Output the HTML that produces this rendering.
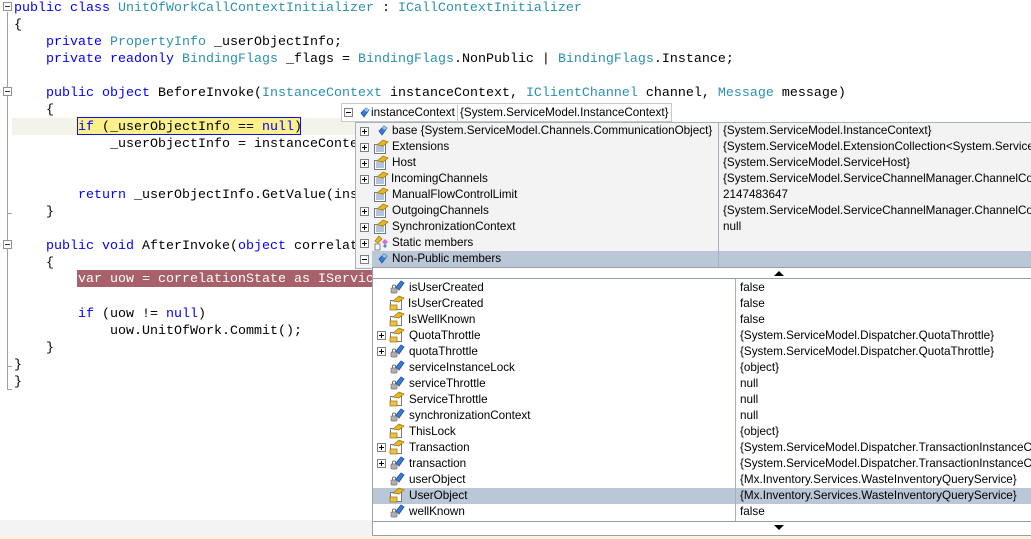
<!DOCTYPE html>
<html><head><meta charset="utf-8">
<style>
*{margin:0;padding:0;box-sizing:border-box}
html,body{width:1031px;height:539px;overflow:hidden}
body{background:#fff;position:relative;font-family:"Liberation Mono",monospace}
#w{position:absolute;left:0;top:0;width:1031px;height:539px;overflow:hidden}
.l{position:absolute;font-size:13.33px;line-height:17px;height:17px;white-space:pre;color:#000}
.k{color:#0000ff}.t{color:#2b91af}
.g{position:absolute;border-left:1px solid #a0a0a0}
.box{position:absolute;width:9px;height:9px;border:1px solid #808080;background:#fff}
.box:before{content:"";position:absolute;left:1px;top:3px;width:5px;height:1px;background:#000}
.box.p:after{content:"";position:absolute;left:3px;top:1px;width:1px;height:5px;background:#000}
.gutbox{position:absolute;left:3px;width:9px;height:9px;border:1px solid #909090;background:#fff}
.gutbox:before{content:"";position:absolute;left:1px;top:3px;width:5px;height:1px;background:#333}
.r{position:absolute;height:16px;font-family:"Liberation Sans",sans-serif;font-size:11.7px;line-height:16px;white-space:nowrap;color:#000}
.v{position:absolute;font-family:"Liberation Sans",sans-serif;font-size:11.7px;line-height:16px;white-space:nowrap;color:#000;height:16px}
svg.i{position:absolute;width:16px;height:16px}
</style></head><body><div id="w">
<svg width="0" height="0" style="position:absolute">
<defs>
<g id="gem"><path d="M5 8 L10 3 L13 5 L8 12 Z" fill="#3a7bd5" stroke="#1d4f9c" stroke-width="0.8"/><path d="M10 3 L13 5 L11 7 L8 5Z" fill="#9cc7f5"/></g>
<g id="fld"><path d="M7 8 L12 2 L15 4 L10 11 Z" fill="#3a7bd5" stroke="#1d4f9c" stroke-width="0.8"/><rect x="2" y="9" width="6" height="5" rx="1" fill="#b0b0b0" stroke="#707070" stroke-width="0.7"/><path d="M3.5 9 V7.5 a1.5 1.5 0 0 1 3 0 V9" fill="none" stroke="#707070"/></g>
<g id="prop"><rect x="1.5" y="5.5" width="11" height="9" fill="#fff" stroke="#6a7a90"/><path d="M3 8h8M3 10h8M3 12h8" stroke="#6a8ab0"/><path d="M4 6 L10 1 L15 3 L10 7 Z" fill="#e8b820" stroke="#9a7010" stroke-width="0.7"/></g>
<g id="propm"><rect x="1.5" y="5.5" width="11" height="9" fill="#fff" stroke="#6a7a90"/><path d="M4 6 L10 1 L15 3 L10 7 Z" fill="#e8b820" stroke="#9a7010" stroke-width="0.7"/><rect x="1" y="10" width="7" height="5" fill="#f0c040" stroke="#9a7010" stroke-width="0.7"/></g>
<g id="stat"><path d="M2 6 L6 1 L9 4 L5 8Z" fill="#e8b820" stroke="#9a7010" stroke-width="0.7"/><path d="M9 7 L12 4 L15 7 L12 10Z" fill="#d070d0"/><rect x="2" y="9" width="5" height="6" fill="#fff" stroke="#555" stroke-width="0.7"/><path d="M10 11 L12 9 L14 11 L12 13Z" fill="#4a8ad5"/></g>
</defs></svg>

<div class="g" style="left:7px;top:12px;height:378px"></div>
<div class="gutbox" style="top:2px"></div>
<div class="gutbox" style="top:87px"></div>
<div class="gutbox" style="top:240px"></div>
<div class="g" style="left:7px;top:213px;width:5px;height:1px;border-left:0;border-top:1px solid #a0a0a0"></div>
<div class="g" style="left:7px;top:366px;width:5px;height:1px;border-left:0;border-top:1px solid #a0a0a0"></div>
<div class="g" style="left:7px;top:389px;width:5px;height:1px;border-left:0;border-top:1px solid #a0a0a0"></div>

<div style="position:absolute;left:12px;top:118px;width:360px;height:17px;background:#f3f3ea"></div>
<div style="position:absolute;left:77px;top:117px;width:224px;height:18px;background:#fbf08a;border:1px solid #1010e0"></div>
<div style="position:absolute;left:77px;top:270px;width:296px;height:17px;background:#a8606a"></div>

<div class="l" style="left:14px;top:0px"><span class="k">public</span> <span class="k">class</span> <span class="t">UnitOfWorkCallContextInitializer</span> : <span class="t">ICallContextInitializer</span></div>
<div class="l" style="left:14px;top:17px">{</div>
<div class="l" style="left:46px;top:34px"><span class="k">private</span> <span class="t">PropertyInfo</span> _userObjectInfo;</div>
<div class="l" style="left:46px;top:51px"><span class="k">private</span> <span class="k">readonly</span> <span class="t">BindingFlags</span> _flags = <span class="t">BindingFlags</span>.NonPublic | <span class="t">BindingFlags</span>.Instance;</div>
<div class="l" style="left:46px;top:85px"><span class="k">public</span> <span class="k">object</span> BeforeInvoke(<span class="t">InstanceContext</span> instanceContext, <span class="t">IClientChannel</span> channel, <span class="t">Message</span> message)</div>
<div class="l" style="left:46px;top:102px">{</div>
<div class="l" style="left:78px;top:119px"><span class="k">if</span> (_userObjectInfo == <span class="k">null</span>)</div>
<div class="l" style="left:110px;top:136px">_userObjectInfo = instanceConte</div>
<div class="l" style="left:78px;top:187px"><span class="k">return</span> _userObjectInfo.GetValue(ins</div>
<div class="l" style="left:46px;top:204px">}</div>
<div class="l" style="left:46px;top:238px"><span class="k">public</span> <span class="k">void</span> AfterInvoke(<span class="k">object</span> correlat</div>
<div class="l" style="left:46px;top:255px">{</div>
<div class="l" style="left:78px;top:271px;color:#fff">var uow = correlationState as IServic</div>
<div class="l" style="left:78px;top:306px"><span class="k">if</span> (uow != <span class="k">null</span>)</div>
<div class="l" style="left:110px;top:323px">uow.UnitOfWork.Commit();</div>
<div class="l" style="left:46px;top:340px">}</div>
<div class="l" style="left:14px;top:357px">}</div>
<div class="l" style="left:14px;top:374px">}</div>

<div style="position:absolute;left:0;top:520px;width:1031px;height:16px;background:#f3f3f3"></div>
<div style="position:absolute;left:0;top:536px;width:1031px;height:3px;background:#fdf3d8"></div>

<div style="position:absolute;left:341px;top:103px;width:331px;height:19px;background:#fff;border:1px solid #c8c8c8"></div>
<div class="box" style="left:344px;top:108px"></div>
<svg class="i" style="left:356px;top:105px"><use href="#gem"/></svg>
<div class="r" style="left:371px;top:105px">instanceContext</div>
<div style="position:absolute;left:457px;top:105px;width:1px;height:16px;background:#c8c8c8"></div>
<div class="r" style="left:460px;top:105px">{System.ServiceModel.InstanceContext}</div>

<div style="position:absolute;left:355px;top:122px;width:680px;height:147px;background:#f3f3f3;border:1px solid #a8b0bc"></div>
<div style="position:absolute;left:372px;top:251px;width:660px;height:16px;background:#bac7d6"></div>
<div style="position:absolute;left:718px;top:123px;width:1px;height:145px;background:#a8b0bc"></div>

<div class="box p" style="left:360px;top:127px"></div><svg class="i" style="left:374px;top:123px"><use href="#gem"/></svg><div class="r" style="left:392px;top:123px">base {System.ServiceModel.Channels.CommunicationObject}</div><div class="v" style="left:723px;top:123px">{System.ServiceModel.InstanceContext}</div>
<div class="box p" style="left:360px;top:143px"></div><svg class="i" style="left:373px;top:139px"><use href="#prop"/></svg><div class="r" style="left:392px;top:139px">Extensions</div><div class="v" style="left:723px;top:139px">{System.ServiceModel.ExtensionCollection&lt;System.ServiceModel.InstanceContext&gt;}</div>
<div class="box p" style="left:360px;top:159px"></div><svg class="i" style="left:373px;top:155px"><use href="#prop"/></svg><div class="r" style="left:392px;top:155px">Host</div><div class="v" style="left:723px;top:155px">{System.ServiceModel.ServiceHost}</div>
<div class="box p" style="left:360px;top:175px"></div><svg class="i" style="left:373px;top:171px"><use href="#prop"/></svg><div class="r" style="left:391px;top:171px">IncomingChannels</div><div class="v" style="left:723px;top:171px">{System.ServiceModel.ServiceChannelManager.ChannelCollection}</div>
<svg class="i" style="left:373px;top:187px"><use href="#prop"/></svg><div class="r" style="left:392px;top:187px">ManualFlowControlLimit</div><div class="v" style="left:723px;top:187px">2147483647</div>
<div class="box p" style="left:360px;top:207px"></div><svg class="i" style="left:373px;top:203px"><use href="#prop"/></svg><div class="r" style="left:392px;top:203px">OutgoingChannels</div><div class="v" style="left:723px;top:203px">{System.ServiceModel.ServiceChannelManager.ChannelCollection}</div>
<div class="box p" style="left:360px;top:223px"></div><svg class="i" style="left:373px;top:219px"><use href="#prop"/></svg><div class="r" style="left:392px;top:219px">SynchronizationContext</div><div class="v" style="left:723px;top:219px">null</div>
<div class="box p" style="left:360px;top:239px"></div><svg class="i" style="left:373px;top:235px"><use href="#stat"/></svg><div class="r" style="left:392px;top:235px">Static members</div>
<div class="box" style="left:360px;top:255px"></div><svg class="i" style="left:374px;top:251px"><use href="#gem"/></svg><div class="r" style="left:392px;top:251px">Non-Public members</div>

<div style="position:absolute;left:372px;top:267px;width:662px;height:269px;background:#fff;border:1px solid #98a0ac"></div>
<div style="position:absolute;left:774px;top:271px;width:0;height:0;border-left:5px solid transparent;border-right:5px solid transparent;border-bottom:5px solid #000"></div>
<div style="position:absolute;left:373px;top:278px;width:660px;height:1px;background:#98a0ac"></div>
<div style="position:absolute;left:373px;top:521px;width:660px;height:1px;background:#98a0ac"></div>
<div style="position:absolute;left:774px;top:525px;width:0;height:0;border-left:5px solid transparent;border-right:5px solid transparent;border-top:5px solid #000"></div>
<div style="position:absolute;left:373px;top:488px;width:660px;height:16px;background:#bac7d6"></div>
<div style="position:absolute;left:735px;top:279px;width:1px;height:242px;background:#a8b0bc"></div>

<svg class="i" style="left:389px;top:279px"><use href="#fld"/></svg><div class="r" style="left:409px;top:280px">isUserCreated</div><div class="v" style="left:740px;top:280px">false</div>
<svg class="i" style="left:389px;top:295px"><use href="#propm"/></svg><div class="r" style="left:408px;top:296px">IsUserCreated</div><div class="v" style="left:740px;top:296px">false</div>
<svg class="i" style="left:389px;top:311px"><use href="#propm"/></svg><div class="r" style="left:408px;top:312px">IsWellKnown</div><div class="v" style="left:740px;top:312px">false</div>
<div class="box p" style="left:377px;top:331px"></div><svg class="i" style="left:389px;top:327px"><use href="#propm"/></svg><div class="r" style="left:409px;top:328px">QuotaThrottle</div><div class="v" style="left:740px;top:328px">{System.ServiceModel.Dispatcher.QuotaThrottle}</div>
<div class="box p" style="left:377px;top:347px"></div><svg class="i" style="left:389px;top:343px"><use href="#fld"/></svg><div class="r" style="left:409px;top:344px">quotaThrottle</div><div class="v" style="left:740px;top:344px">{System.ServiceModel.Dispatcher.QuotaThrottle}</div>
<svg class="i" style="left:389px;top:359px"><use href="#fld"/></svg><div class="r" style="left:409px;top:360px">serviceInstanceLock</div><div class="v" style="left:740px;top:360px">{object}</div>
<svg class="i" style="left:389px;top:375px"><use href="#fld"/></svg><div class="r" style="left:409px;top:376px">serviceThrottle</div><div class="v" style="left:740px;top:376px">null</div>
<svg class="i" style="left:389px;top:391px"><use href="#propm"/></svg><div class="r" style="left:409px;top:392px">ServiceThrottle</div><div class="v" style="left:740px;top:392px">null</div>
<svg class="i" style="left:389px;top:407px"><use href="#fld"/></svg><div class="r" style="left:409px;top:408px">synchronizationContext</div><div class="v" style="left:740px;top:408px">null</div>
<svg class="i" style="left:389px;top:423px"><use href="#propm"/></svg><div class="r" style="left:409px;top:424px">ThisLock</div><div class="v" style="left:740px;top:424px">{object}</div>
<div class="box p" style="left:377px;top:443px"></div><svg class="i" style="left:389px;top:439px"><use href="#propm"/></svg><div class="r" style="left:409px;top:440px">Transaction</div><div class="v" style="left:740px;top:440px">{System.ServiceModel.Dispatcher.TransactionInstanceContextFacet}</div>
<div class="box p" style="left:377px;top:459px"></div><svg class="i" style="left:389px;top:455px"><use href="#fld"/></svg><div class="r" style="left:409px;top:456px">transaction</div><div class="v" style="left:740px;top:456px">{System.ServiceModel.Dispatcher.TransactionInstanceContextFacet}</div>
<svg class="i" style="left:389px;top:471px"><use href="#fld"/></svg><div class="r" style="left:409px;top:472px">userObject</div><div class="v" style="left:740px;top:472px">{Mx.Inventory.Services.WasteInventoryQueryService}</div>
<svg class="i" style="left:389px;top:487px"><use href="#propm"/></svg><div class="r" style="left:409px;top:488px">UserObject</div><div class="v" style="left:740px;top:488px">{Mx.Inventory.Services.WasteInventoryQueryService}</div>
<svg class="i" style="left:389px;top:503px"><use href="#fld"/></svg><div class="r" style="left:409px;top:504px">wellKnown</div><div class="v" style="left:740px;top:504px">false</div>
</div></body></html>
